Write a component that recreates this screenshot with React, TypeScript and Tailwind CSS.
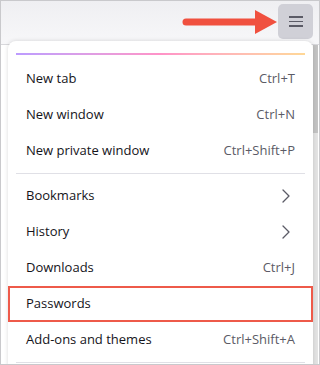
const rows = [
  { label: 'New tab', shortcut: 'Ctrl+T' },
  { label: 'New window', shortcut: 'Ctrl+N' },
  { label: 'New private window', shortcut: 'Ctrl+Shift+P' },
];

const rows2 = [
  { label: 'Bookmarks', arrow: true },
  { label: 'History', arrow: true },
  { label: 'Downloads', shortcut: 'Ctrl+J' },
  { label: 'Passwords', highlight: true },
  { label: 'Add-ons and themes', shortcut: 'Ctrl+Shift+A' },
];

function Row({ label, shortcut, arrow, highlight }: { label: string; shortcut?: string; arrow?: boolean; highlight?: boolean }) {
  return (
    <div
      className={
        highlight
          ? 'h-[36px] flex items-center justify-between px-[16px] border-[2.5px] border-[#ee5a4a]'
          : 'h-[36px] flex items-center justify-between px-[18px]'
      }
    >
      <span className="text-[#15141a]">{label}</span>
      {shortcut && <span className="text-[#5b5b66]">{shortcut}</span>}
      {arrow && (
        <svg className="mr-[5px]" width="8" height="14" viewBox="0 0 8 14">
          <path d="M1 1 L7 7 L1 13" fill="none" stroke="#5b5b66" strokeWidth="1.3" strokeLinecap="round" strokeLinejoin="round" />
        </svg>
      )}
    </div>
  );
}

export default function App() {
  return (
    <div
      className="relative w-[320px] h-[365px] overflow-hidden border border-[#c9c9cc] bg-white text-[13px]"
      style={{ fontFamily: '"Open Sans", "Liberation Sans", sans-serif' }}
    >
      {/* Toolbar */}
      <div className="h-[44px] bg-gradient-to-b from-[#efeff2] to-[#f7f7f9] border-b border-[#d8d8dc] flex justify-end items-start pt-[3px] pr-[6px]">
        <button className="w-[35px] h-[35px] rounded-[5px] bg-[#d0d0d7] flex flex-col items-center justify-center gap-[3px]">
          <span className="block w-[14px] h-[1.5px] bg-[#5b5b66]" />
          <span className="block w-[14px] h-[1.5px] bg-[#5b5b66]" />
          <span className="block w-[14px] h-[1.5px] bg-[#5b5b66]" />
        </button>
      </div>

      {/* Annotation arrow */}
      <svg className="absolute left-[180px] top-[8px]" width="100" height="26" viewBox="0 0 100 26">
        <line x1="5" y1="13" x2="78" y2="13" stroke="#f0503f" strokeWidth="7" strokeLinecap="round" />
        <polygon points="74,1 96,13 74,25" fill="#f0503f" />
      </svg>

      {/* Scrollbar */}
      <div className="absolute right-[1px] top-[44px] w-[5px] h-[330px] bg-[#e3e3e3]">
        <div className="w-full h-[88px] bg-[#c3c3c3]" />
      </div>

      {/* Menu panel */}
      <div className="absolute left-[7px] top-[40px] w-[305px] bg-white rounded-t-[8px] shadow-[0_0_4px_rgba(0,0,0,0.15)] pt-[12px]">
        <div className="mx-[8px] h-[2px] opacity-60 bg-gradient-to-r from-[#9059ff] via-[#ff4aa2] to-[#ffbd4f]" />
        <div className="pt-[6px]">
          {rows.map((r) => (
            <Row key={r.label} {...r} />
          ))}
        </div>
        <div className="mx-[8px] my-[4px] h-px bg-[#e0e0e6]" />
        {rows2.map((r) => (
          <Row key={r.label} {...r} />
        ))}
        <div className="mx-[8px] my-[4px] h-px bg-[#e0e0e6]" />
      </div>
    </div>
  );
}
